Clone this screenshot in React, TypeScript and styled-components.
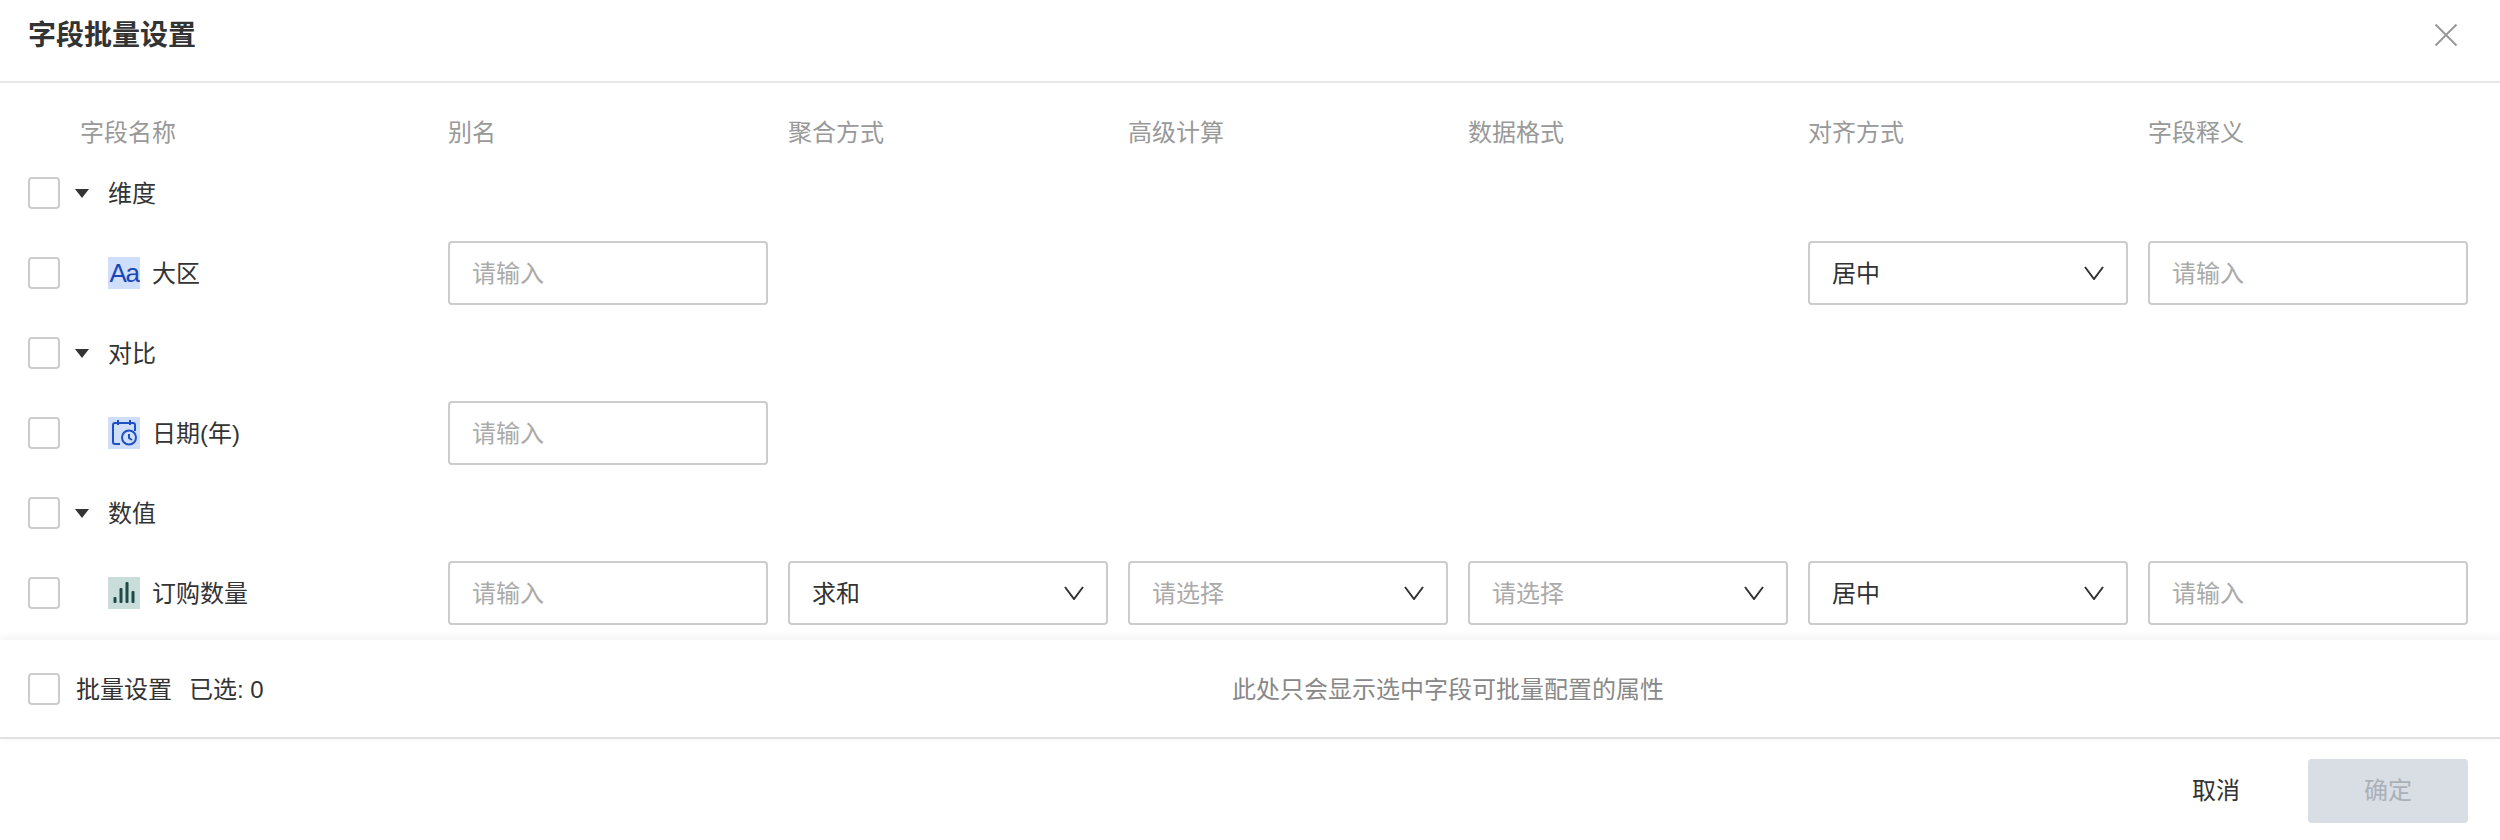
import React from 'react'
import styled, { createGlobalStyle, css } from 'styled-components'

const GlobalStyle = createGlobalStyle`
  html, body {
    margin: 0;
    padding: 0;
    background: #fff;
  }

  body {
    font-family: 'Liberation Sans', 'Noto Sans CJK SC', sans-serif;
    font-size: 24px;
    line-height: 32px;
    color: #333;
  }
`

// the CJK glyphs sit a touch high in their line box
const nudged = css`
  padding-top: 2px;
`

const Dialog = styled.div`
  width: 2500px;
  height: 840px;
  display: flex;
  flex-direction: column;
  overflow: hidden;
  background: #fff;
`

const Header = styled.div`
  height: 83px;
  flex: none;
  display: flex;
  align-items: center;
  justify-content: space-between;
  padding: 0 42px 10px 28px;
  box-sizing: border-box;
  border-bottom: 2px solid #e4e6e7;
`

const Title = styled.div`
  font-size: 28px;
  line-height: 36px;
  font-weight: 700;
  color: #333;
`

const CloseIcon = styled.svg`
  width: 24px;
  height: 24px;
  display: block;
  margin-bottom: 2px;
  stroke: #999;
  stroke-width: 2;
  fill: none;
`

const Body = styled.div`
  flex: none;
  height: 557px;
  box-sizing: border-box;
  padding: 30px 32px 0 28px;
`

const Grid = styled.div<{ $height: number }>`
  display: grid;
  grid-template-columns: 400px repeat(6, 320px);
  column-gap: 20px;
  align-items: center;
  height: ${p => p.$height}px;
`

const HeadCell = styled.div<{ $first?: boolean }>`
  color: #999;
  padding-left: ${p => (p.$first ? 52 : 0)}px;
`

const NameCell = styled.div`
  display: flex;
  align-items: center;
`

const Checkbox = styled.span`
  width: 32px;
  height: 32px;
  flex: none;
  box-sizing: border-box;
  border: 2px solid #ccc;
  border-radius: 4px;
  background: #fff;
`

const Caret = styled.span`
  width: 0;
  height: 0;
  flex: none;
  margin: 0 19px 0 15px;
  border-left: 7px solid transparent;
  border-right: 7px solid transparent;
  border-top: 9px solid #333;
`

const GroupLabel = styled.span`
  ${nudged}
`

const FieldLabel = styled.span`
  ${nudged}
  margin-left: 12px;
`

const IconTile = styled.span<{ $bg: string }>`
  width: 32px;
  height: 32px;
  flex: none;
  margin-left: 48px;
  display: flex;
  align-items: center;
  justify-content: center;
  overflow: hidden;
  background: ${p => p.$bg};
`

const AaGlyph = styled.span`
  font-family: 'Liberation Sans', sans-serif;
  font-size: 26px;
  line-height: 32px;
  letter-spacing: -1.5px;
  color: #1a47b8;
`

const Input = styled.div`
  height: 64px;
  box-sizing: border-box;
  border: 2px solid #ccc;
  border-radius: 4px;
  padding: 0 22px;
  display: flex;
  align-items: center;
  justify-content: space-between;
  background: #fff;
`

const Text = styled.span<{ $muted?: boolean }>`
  ${nudged}
  color: ${p => (p.$muted ? '#aaa' : '#333')};
`

const Chevron = styled.svg`
  width: 20px;
  height: 14px;
  display: block;
  stroke: #333;
  stroke-width: 2;
  fill: none;
`

const BulkBar = styled.div`
  flex: none;
  height: 99px;
  box-sizing: border-box;
  display: flex;
  align-items: center;
  padding: 1px 32px 0 28px;
  border-bottom: 2px solid #e2e2e2;
  box-shadow: 0 -3px 8px rgba(0, 0, 0, 0.05), 0 3px 6px rgba(0, 0, 0, 0.015);
  position: relative;
`

const BulkLeft = styled.div`
  width: 400px;
  flex: none;
  display: flex;
  align-items: center;
`

const BulkLabel = styled.span`
  ${nudged}
  margin-left: 16px;
`

const BulkCount = styled.span`
  ${nudged}
  margin-left: 17px;
`

const BulkHint = styled.div`
  ${nudged}
  flex: 1;
  text-align: center;
  color: #888;
`

const Footer = styled.div`
  flex: none;
  display: flex;
  justify-content: flex-end;
  align-items: center;
  gap: 68px;
  padding: 20px 32px 0 0;
`

const CancelButton = styled.button`
  border: none;
  background: none;
  padding: 0;
  font: inherit;
  color: #333;
`

const ConfirmButton = styled.button`
  width: 160px;
  height: 64px;
  border: none;
  border-radius: 4px;
  padding: 0;
  font: inherit;
  color: #aab0b8;
  background: #d9dde4;
`

const columns = ['别名', '聚合方式', '高级计算', '数据格式', '对齐方式', '字段释义']

const InputBox = () => (
  <Input>
    <Text $muted>请输入</Text>
  </Input>
)

const SelectBox = ({ value, muted }: { value: string; muted?: boolean }) => (
  <Input>
    <Text $muted={muted}>{value}</Text>
    <Chevron viewBox="0 0 20 14">
      <path d="M1 1 L10 13 L19 1" />
    </Chevron>
  </Input>
)

const GroupRow = ({ name }: { name: string }) => (
  <Grid $height={80}>
    <NameCell>
      <Checkbox />
      <Caret />
      <GroupLabel>{name}</GroupLabel>
    </NameCell>
  </Grid>
)

export default function App() {
  return (
    <Dialog>
      <GlobalStyle />
      <Header>
        <Title>字段批量设置</Title>
        <CloseIcon viewBox="0 0 24 24">
          <path d="M1.500 1.500 L22.500 22.500 M22.500 1.500 L1.500 22.500" />
        </CloseIcon>
      </Header>
      <Body>
        <Grid $height={40}>
          <HeadCell $first>字段名称</HeadCell>
          {columns.map(c => (
            <HeadCell key={c}>{c}</HeadCell>
          ))}
        </Grid>

        <GroupRow name="维度" />
        <Grid $height={80}>
          <NameCell>
            <Checkbox />
            <IconTile $bg="#cfdffb">
              <AaGlyph>Aa</AaGlyph>
            </IconTile>
            <FieldLabel>大区</FieldLabel>
          </NameCell>
          <InputBox />
          <span />
          <span />
          <span />
          <SelectBox value="居中" />
          <InputBox />
        </Grid>

        <GroupRow name="对比" />
        <Grid $height={80}>
          <NameCell>
            <Checkbox />
            <IconTile $bg="#cfdffb">
              <svg width="32" height="32" viewBox="0 0 32 32" fill="none" stroke="#1f4fc0" strokeWidth="2">
                <path d="M12 27 H7 A2 2 0 0 1 5 25 V8 A2 2 0 0 1 7 6 H25 A2 2 0 0 1 27 8 V14" />
                <path d="M10 3 V8 M22 3 V8" />
                <circle cx="21" cy="20.500" r="7" />
                <path d="M21 17 V21 L24 23" />
              </svg>
            </IconTile>
            <FieldLabel>日期(年)</FieldLabel>
          </NameCell>
          <InputBox />
        </Grid>

        <GroupRow name="数值" />
        <Grid $height={80}>
          <NameCell>
            <Checkbox />
            <IconTile $bg="#c9dedb">
              <svg width="32" height="32" viewBox="0 0 32 32" fill="#1e4a4a">
                <rect x="5.500" y="20" width="3" height="6" rx="1" />
                <rect x="11.500" y="11" width="3" height="15" rx="1" />
                <rect x="17.500" y="5" width="3" height="21" rx="1" />
                <rect x="23.500" y="14" width="3" height="12" rx="1" />
              </svg>
            </IconTile>
            <FieldLabel>订购数量</FieldLabel>
          </NameCell>
          <InputBox />
          <SelectBox value="求和" />
          <SelectBox value="请选择" muted />
          <SelectBox value="请选择" muted />
          <SelectBox value="居中" />
          <InputBox />
        </Grid>
      </Body>

      <BulkBar>
        <BulkLeft>
          <Checkbox />
          <BulkLabel>批量设置</BulkLabel>
          <BulkCount>已选: 0</BulkCount>
        </BulkLeft>
        <BulkHint>此处只会显示选中字段可批量配置的属性</BulkHint>
      </BulkBar>

      <Footer>
        <CancelButton>取消</CancelButton>
        <ConfirmButton>确定</ConfirmButton>
      </Footer>
    </Dialog>
  )
}
